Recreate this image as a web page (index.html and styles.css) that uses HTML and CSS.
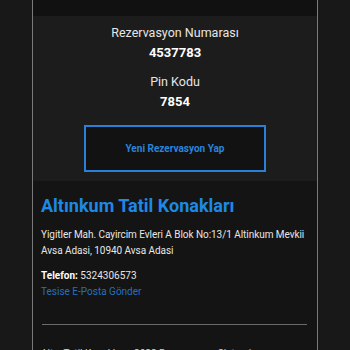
FILE: index.html
```html
<!DOCTYPE html>
<html lang="tr">
<head>
    <meta charset="UTF-8">
    <meta name="viewport" content="width=device-width, initial-scale=1.0">
    <title>Rezervasyon Onayı - Altınkum Tatil Konakları</title>
    <link rel="stylesheet" href="styles.css">
</head>
<body>
    <div class="page">
        <div class="top-band"></div>

        <!-- Reservation summary -->
        <div class="summary">
            <div class="label">Rezervasyon Numarası</div>
            <div class="value">4537783</div>
            <div class="label second">Pin Kodu</div>
            <div class="value">7854</div>
            <a class="new-booking" href="#">Yeni Rezervasyon Yap</a>
        </div>

        <!-- Property info -->
        <div class="property">
            <h2>Altınkum Tatil Konakları</h2>
            <p class="address">Yigitler Mah. Cayircim Evleri A Blok No:13/1 Altinkum Mevkii Avsa Adasi, 10940 Avsa Adasi</p>
            <p class="phone"><strong>Telefon:</strong> 5324306573</p>
            <a class="mail" href="#">Tesise E-Posta Gönder</a>
            <hr>
            <p class="footer">Altın Tatil Konakları &nbsp; 2023 Rezervasyon Sistemi</p>
        </div>
    </div>
</body>
</html>
```

FILE: styles.css
```css
body {
    margin: 0;
    background-color: #181818;
    font-family: Roboto, "Liberation Sans", sans-serif;
    color: #e6e6e6;
}
.page {
    margin: 0 32px;
    min-height: 350px;
    background: #141414;
    border-left: 1px solid #7a7a7a;
    border-right: 1px solid #7a7a7a;
}
.top-band {
    height: 16px;
    background: #111;
}
.summary {
    background: #1c1c1c;
    text-align: center;
    padding: 7px 0 9px;
}
.label {
    font-size: 12.5px;
    line-height: 20px;
}
.label.second {
    margin-top: 9px;
}
.value {
    font-size: 13px;
    font-weight: bold;
    line-height: 20px;
    color: #fff;
}
.new-booking {
    display: flex;
    align-items: center;
    justify-content: center;
    width: 178px;
    height: 43px;
    margin: 13px auto 0;
    border: 2px solid #2a80d8;
    background: #121212;
    color: #2a84dc;
    font-size: 10px;
    font-weight: bold;
    text-decoration: none;
}
.property {
    padding: 12px 9px 0 8px;
}
.property h2 {
    margin: 0;
    font-size: 18px;
    line-height: 26px;
    color: #1e88e5;
}
.address {
    margin: 8px 0 0;
    font-size: 10px;
    line-height: 16px;
    letter-spacing: -0.05px;
}
.phone {
    margin: 9px 0 0;
    font-size: 10px;
    line-height: 16px;
}
.phone strong {
    color: #fff;
}
.mail {
    display: block;
    font-size: 10px;
    line-height: 16px;
    color: #2670bf;
    text-decoration: none;
}
hr {
    margin: 24px 1px 0;
    border: none;
    border-top: 1px solid #6a6a6a;
}
.footer {
    margin: 23px 0 0;
    font-size: 10px;
    color: #cfcfcf;
}
```
